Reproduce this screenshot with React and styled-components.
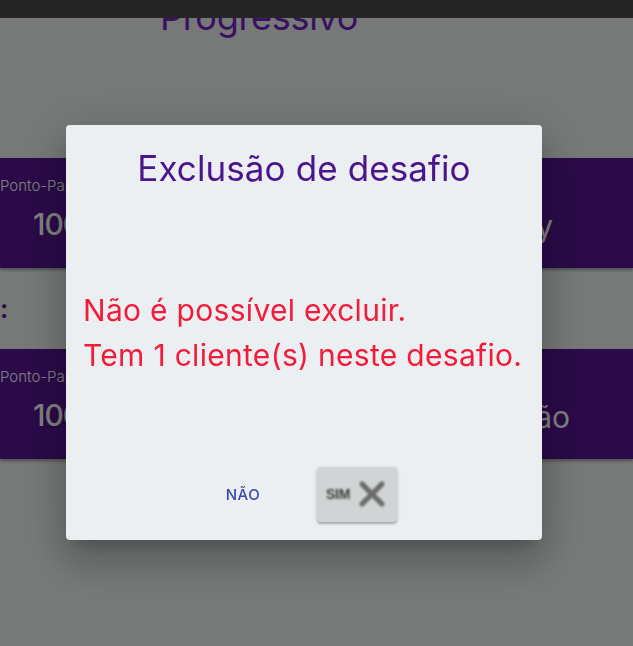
import React from 'react';
import styled, { createGlobalStyle } from 'styled-components';

const GlobalStyle = createGlobalStyle`
  html, body {
    margin: 0;
    padding: 0;
    background: #eef1f1;
    font-family: 'Inter', 'Noto Sans', sans-serif;
    overflow: hidden;
  }
`;

const TopBar = styled.header`
  position: fixed;
  top: 0;
  left: 0;
  right: 0;
  height: 18px;
  background: #252525;
  z-index: 20;
`;

const Page = styled.main`
  padding-top: 18px;
  height: 628px;
  display: flex;
  flex-direction: column;
`;

const PageTitle = styled.h1`
  margin: -21px 0 0 160px;
  font-size: 36px;
  line-height: 40px;
  font-weight: 400;
  color: #7422c2;
  letter-spacing: -0.3px;
`;

const Card = styled.section`
  margin-top: ${(p) => p.$top}px;
  height: 110px;
  flex-shrink: 0;
  background: #541490;
  box-shadow: 0 2px 3px rgba(0, 0, 0, 0.35);
  display: flex;
  justify-content: space-between;
  align-items: flex-start;
  color: #ffffff;
`;

const Stat = styled.div`
  display: flex;
  flex-direction: column;
  align-items: flex-start;
  padding-top: 18px;
`;

const StatLabel = styled.span`
  font-size: 15px;
  line-height: 20px;
  font-weight: 300;
`;

const StatValue = styled.span`
  margin: 8px 0 0 33px;
  font-size: 30px;
  line-height: 40px;
  font-weight: 500;
  letter-spacing: -1px;
`;

const Side = styled.span`
  padding: 48px ${(p) => p.$right}px 0 0;
  font-size: 30px;
  line-height: 40px;
  font-weight: 400;
`;

const Heading = styled.div`
  margin-top: 23px;
  font-size: 26px;
  line-height: 36px;
  font-weight: 600;
  color: #541490;
`;

const Overlay = styled.div`
  position: fixed;
  top: 18px;
  left: 0;
  right: 0;
  bottom: 0;
  padding-right: 25px;
  background: rgba(0, 0, 0, 0.5);
  display: flex;
  align-items: center;
  justify-content: center;
  z-index: 10;
`;

const Dialog = styled.div`
  width: 476px;
  height: 415px;
  box-sizing: border-box;
  background: #eceff1;
  border-radius: 4px;
  box-shadow: 0 11px 15px -7px rgba(0, 0, 0, 0.2),
    0 24px 38px 3px rgba(0, 0, 0, 0.14), 0 9px 46px 8px rgba(0, 0, 0, 0.12);
  display: flex;
  flex-direction: column;
`;

const DialogTitle = styled.h2`
  margin: 22px 0 0;
  text-align: center;
  font-size: 35px;
  line-height: 42px;
  font-weight: 400;
  color: #4a148c;
  letter-spacing: 0.1px;
`;

const Message = styled.div`
  margin-top: 99px;
  padding-left: 17px;
  color: #f21c3a;
  font-size: 30px;
  line-height: 45px;
  font-weight: 400;
  letter-spacing: 0.3px;
  white-space: nowrap;
`;

const Actions = styled.div`
  margin-top: 89px;
  display: flex;
  justify-content: center;
  align-items: center;
  gap: 42px;
`;

const TextButton = styled.button`
  min-width: 64px;
  padding: 6px 8px;
  border: none;
  background: none;
  font-family: inherit;
  font-size: 15px;
  font-weight: 500;
  letter-spacing: 0.6px;
  color: #3949ab;
  cursor: pointer;
`;

const RaisedButton = styled.button`
  width: 80px;
  height: 55px;
  padding: 0 7px 0 9px;
  border: none;
  border-radius: 4px;
  background: #d1d4d5;
  box-shadow: 0 2px 2px rgba(0, 0, 0, 0.22), 0 1px 5px rgba(0, 0, 0, 0.12);
  display: flex;
  align-items: center;
  justify-content: space-between;
  cursor: pointer;
`;

const Blurred = styled.span`
  display: flex;
  align-items: center;
  gap: 8px;
  filter: blur(0.8px);
  font-family: inherit;
  font-size: 14px;
  font-weight: 800;
  letter-spacing: -0.3px;
  color: #3a3a3a;
`;

const CloseIcon = () => (
  <svg width="28" height="28" viewBox="0 0 24 24">
    <path d="M3.5 3.5 L20.5 20.5 M20.5 3.5 L3.5 20.5" stroke="#6b6b6b" strokeWidth="4.4" strokeLinecap="round" />
  </svg>
);

export default function App() {
  return (
    <>
      <GlobalStyle />
      <TopBar />
      <Page>
        <PageTitle>Progressivo</PageTitle>
        <Card $top={121}>
          <Stat>
            <StatLabel>Ponto-Partida</StatLabel>
            <StatValue>100</StatValue>
          </Stat>
          <Side $right={80}>Daily</Side>
        </Card>
        <Heading>:</Heading>
        <Card $top={22}>
          <Stat>
            <StatLabel>Ponto-Partida</StatLabel>
            <StatValue>100</StatValue>
          </Stat>
          <Side $right={63}>Sessão</Side>
        </Card>
      </Page>
      <Overlay>
        <Dialog role="dialog">
          <DialogTitle>Exclusão de desafio</DialogTitle>
          <Message>
            Não é possível excluir.
            <br />
            Tem 1 cliente(s) neste desafio.
          </Message>
          <Actions>
            <TextButton>NÃO</TextButton>
            <RaisedButton>
              <Blurred>
                SIM
                <CloseIcon />
              </Blurred>
            </RaisedButton>
          </Actions>
        </Dialog>
      </Overlay>
    </>
  );
}
